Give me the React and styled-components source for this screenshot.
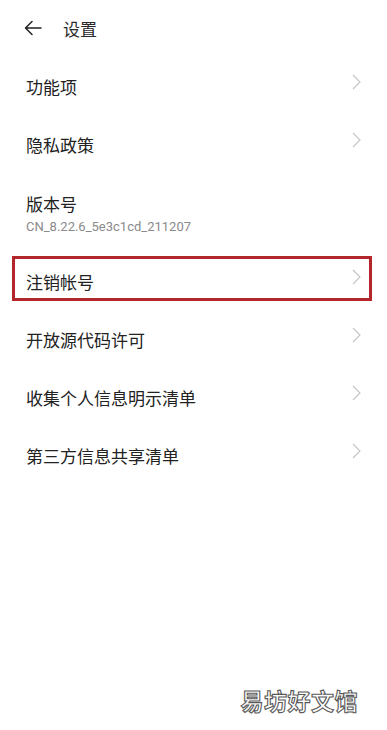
import React from 'react';
import styled, { createGlobalStyle } from 'styled-components';

const GlobalStyle = createGlobalStyle`
    html, body {
        margin: 0;
        padding: 0;
        background: #ffffff;
    }
    body {
        font-family: "Noto Sans CJK SC", "Noto Sans", Roboto, sans-serif;
        color: #222222;
    }
`;

const Page = styled.div`
    width: 387px;
    height: 730px;
    background: #ffffff;
    position: relative;
    overflow: hidden;
    display: flex;
    flex-direction: column;
`;

const Header = styled.div`
    height: 56px;
    display: flex;
    align-items: center;
    padding-left: 24px;
    gap: 21px;
`;

const BackButton = styled.div`
    width: 18px;
    height: 16px;
    display: flex;
    align-items: center;
`;

const HeaderTitle = styled.div`
    font-size: 17px;
    line-height: 1;
    color: #2a2a2a;
`;

const List = styled.div`
    display: flex;
    flex-direction: column;
    padding-top: 1px;
`;

const Row = styled.div`
    position: relative;
    height: ${props => props.tall ? '79px' : '58px'};
    display: flex;
    align-items: ${props => props.tall ? 'flex-start' : 'center'};
    justify-content: space-between;
    padding: ${props => props.tall ? '22px 26px 0 26px' : '0 26px'};
    box-sizing: border-box;
`;

const TextBlock = styled.div`
    display: flex;
    flex-direction: column;
    gap: 8px;
`;

const Label = styled.div`
    font-size: 17px;
    line-height: 1;
    color: #222222;
`;

const SubLabel = styled.div`
    font-family: Roboto, "Noto Sans", sans-serif;
    font-size: 13px;
    line-height: 1;
    color: #8a8a8a;
`;

const Chevron = styled.svg`
    width: 9px;
    height: 16px;
    margin-top: -8px;
    flex-shrink: 0;
`;

const Highlight = styled.div`
    position: absolute;
    left: 12px;
    top: 4px;
    width: 360px;
    height: 45px;
    box-sizing: border-box;
    border: 3px solid #b3262a;
    pointer-events: none;
`;

const Watermark = styled.div`
    position: absolute;
    right: 29px;
    bottom: 18px;
    font-size: 23px;
    line-height: 1;
    letter-spacing: 0.5px;
    color: #ffffff;
    -webkit-text-stroke: 1.1px #5a5a5a;
    font-weight: 700;
`;

const items = [
    { label: '功能项' },
    { label: '隐私政策' },
    { label: '版本号', sub: 'CN_8.22.6_5e3c1cd_211207' },
    { label: '注销帐号', highlight: true },
    { label: '开放源代码许可' },
    { label: '收集个人信息明示清单' },
    { label: '第三方信息共享清单' },
];

const ChevronIcon = () => (
    <Chevron viewBox="0 0 9 16">
        <polyline points="1,1 8,8 1,15" fill="none" stroke="#c6c6c6" strokeWidth="1.2" />
    </Chevron>
);

const App = () => {
    return (
        <Page>
            <GlobalStyle />
            <Header>
                <BackButton>
                    <svg width="18" height="16" viewBox="0 0 18 16">
                        <path d="M17 8 H1.5 M8 1.5 L1.5 8 L8 14.5" fill="none" stroke="#222" strokeWidth="1.5" strokeLinecap="round" strokeLinejoin="round" />
                    </svg>
                </BackButton>
                <HeaderTitle>设置</HeaderTitle>
            </Header>
            <List>
                {items.map(item => (
                    <Row key={item.label} tall={item.sub ? 1 : 0}>
                        {item.sub ? (
                            <TextBlock>
                                <Label>{item.label}</Label>
                                <SubLabel>{item.sub}</SubLabel>
                            </TextBlock>
                        ) : (
                            <>
                                <Label>{item.label}</Label>
                                <ChevronIcon />
                            </>
                        )}
                        {item.highlight && <Highlight />}
                    </Row>
                ))}
            </List>
            <Watermark>易坊好文馆</Watermark>
        </Page>
    );
};

export default App;
